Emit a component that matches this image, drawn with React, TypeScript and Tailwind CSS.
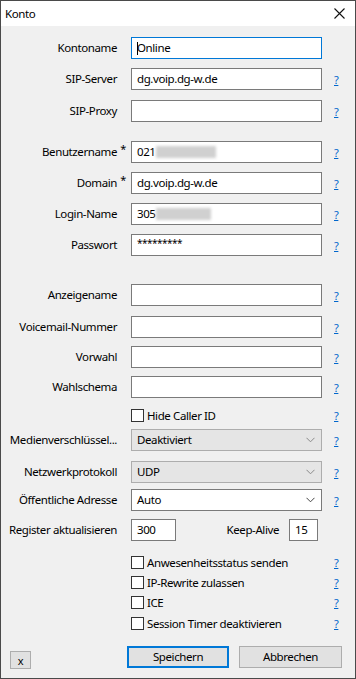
import type { ReactNode } from 'react'

const FONT = { fontFamily: '"Noto Sans", "Liberation Sans", sans-serif' }

function Help() {
  return <span className="ml-[12px] text-[11px] text-[#0066cc] underline leading-none">?</span>
}

function Label({ text, star, w = 'w-[116px]' }: { text: string; star?: boolean; w?: string }) {
  return (
    <div className={`${w} flex justify-end text-[11.5px] text-black relative whitespace-nowrap shrink-0`}>
      <span>{text}</span>
      {star && <span className="absolute -right-[9px] -top-[2px] text-[11px]">*</span>}
    </div>
  )
}

function Row({ label, star, mt, children, help = true }: { label: string; star?: boolean; mt: string; children: ReactNode; help?: boolean }) {
  return (
    <div className={`flex items-center h-[22px] ${mt}`}>
      <Label text={label} star={star} />
      <div className="ml-[14px] w-[191px] h-full flex">{children}</div>
      {help && <Help />}
    </div>
  )
}

function Input({ value, focused, children }: { value?: string; focused?: boolean; children?: ReactNode }) {
  return (
    <div
      className={`w-full h-full bg-white border flex items-center pl-[5px] text-[11.5px] text-black ${
        focused ? 'border-[#0078d7]' : 'border-[#7a7a7a]'
      }`}
    >
      {children ?? value}
    </div>
  )
}

function Select({ value, disabled }: { value: string; disabled?: boolean }) {
  return (
    <div
      className={`w-full h-full border flex items-center justify-between pl-[5px] pr-[6px] text-[11.5px] text-black ${
        disabled ? 'bg-[#e5e5e5] border-[#adadad]' : 'bg-white border-[#7a7a7a]'
      }`}
    >
      <span>{value}</span>
      <svg width="9" height="6" viewBox="0 0 9 6" fill="none" stroke={disabled ? '#8a8a8a' : '#444'} strokeWidth="1">
        <path d="M0.5 0.8 L4.5 4.8 L8.5 0.8" />
      </svg>
    </div>
  )
}

function Blur({ w }: { w: number }) {
  return <span className="inline-block h-[12px] bg-[#d0d0d0] blur-[1.5px]" style={{ width: w }} />
}

function Check({ label, mt }: { label: string; mt: string }) {
  return (
    <div className={`flex items-center h-[13px] ${mt}`}>
      <div className="ml-[130px] w-[13px] h-[13px] bg-white border border-[#333]" />
      <span className="ml-[3px] w-[175px] text-[11.5px] text-black whitespace-nowrap">{label}</span>
      <Help />
    </div>
  )
}

export default function App() {
  return (
    <div
      className="w-[356px] h-[679px] border border-[#4a4a4a] bg-[#f0f0f0] flex flex-col overflow-hidden tracking-[-0.4px]"
      style={FONT}
    >
      <div className="h-[25px] bg-white flex items-center justify-between pl-[4px] pr-[10px] shrink-0">
        <span className="text-[11.5px] text-black">Konto</span>
        <svg width="11" height="11" viewBox="0 0 11 11" stroke="#111" strokeWidth="1.1">
          <path d="M0.5 0.5 L10.5 10.5 M10.5 0.5 L0.5 10.5" />
        </svg>
      </div>

      <Row label="Kontoname" mt="mt-[11px]" help={false}>
        <Input focused>
          <span className="w-[1px] h-[13px] bg-black mr-[-1px]" />
          Online
        </Input>
      </Row>
      <Row label="SIP-Server" mt="mt-[9px]">
        <Input value="dg.voip.dg-w.de" />
      </Row>
      <Row label="SIP-Proxy" mt="mt-[10px]">
        <Input />
      </Row>

      <Row label="Benutzername" star mt="mt-[19px]">
        <Input>
          021
          <Blur w={60} />
        </Input>
      </Row>
      <Row label="Domain" star mt="mt-[9px]">
        <Input value="dg.voip.dg-w.de" />
      </Row>
      <Row label="Login-Name" mt="mt-[9px]">
        <Input>
          305
          <Blur w={55} />
        </Input>
      </Row>
      <Row label="Passwort" mt="mt-[9px]">
        <Input>
          <span className="text-[10px] tracking-[-0.5px] -mt-[4px]">*********</span>
        </Input>
      </Row>

      <Row label="Anzeigename" mt="mt-[28px]">
        <Input />
      </Row>
      <Row label="Voicemail-Nummer" mt="mt-[10px]">
        <Input />
      </Row>
      <Row label="Vorwahl" mt="mt-[8px]">
        <Input />
      </Row>
      <Row label="Wahlschema" mt="mt-[8px]">
        <Input />
      </Row>
      <Check label="Hide Caller ID" mt="mt-[11px]" />

      <Row label="Medienverschlüssel..." mt="mt-[7px]">
        <Select value="Deaktiviert" disabled />
      </Row>
      <Row label="Netzwerkprotokoll" mt="mt-[10px]">
        <Select value="UDP" disabled />
      </Row>
      <Row label="Öffentliche Adresse" mt="mt-[6px]">
        <Select value="Auto" />
      </Row>

      <div className="flex items-center h-[22px] mt-[8px]">
        <Label text="Register aktualisieren" />
        <div className="ml-[14px] w-[45px] h-full">
          <Input value="300" />
        </div>
        <Label text="Keep-Alive" w="w-[103px]" />
        <div className="ml-[10px] w-[29px] h-full">
          <Input value="15" />
        </div>
      </div>

      <Check label="Anwesenheitsstatus senden" mt="mt-[15px]" />
      <Check label="IP-Rewrite zulassen" mt="mt-[7px]" />
      <Check label="ICE" mt="mt-[7px]" />
      <Check label="Session Timer deaktivieren" mt="mt-[8px]" />

      <div className="flex items-end mt-[16px] h-[22px]">
        <button className="ml-[9px] w-[21px] h-[18px] -mb-[1px] bg-[#e1e1e1] border border-[#adadad] text-[11px] leading-none text-black">
          x
        </button>
        <button className="ml-[96px] w-[102px] h-[22px] bg-[#e1e1e1] border-2 border-[#0078d7] text-[11.5px] text-black">
          Speichern
        </button>
        <button className="ml-[10px] w-[103px] h-[22px] bg-[#e1e1e1] border border-[#adadad] text-[11.5px] text-black">
          Abbrechen
        </button>
      </div>
    </div>
  )
}
